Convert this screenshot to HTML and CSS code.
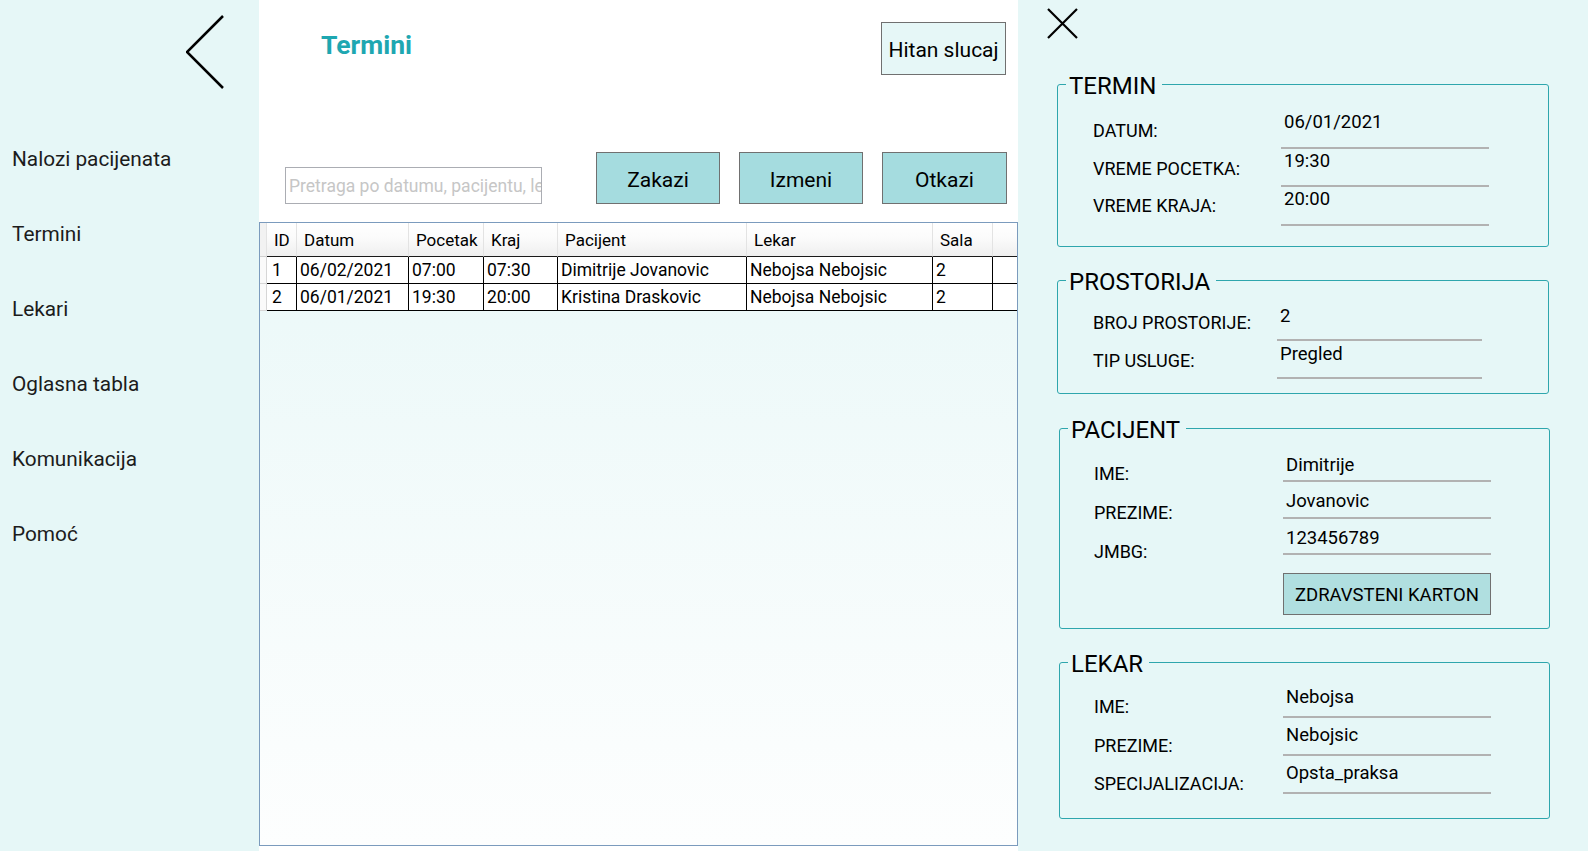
FILE: index.html
```html
<!DOCTYPE html>
<html lang="sr">
<head>
<meta charset="utf-8">
<title>Termini</title>
<link rel="stylesheet" href="styles.css">
</head>
<body>
<div class="app">
  <aside class="sidebar">
    <button class="back" type="button" aria-label="Nazad">
      <svg class="back-icon" width="38" height="74" viewBox="0 0 38 74"><path d="M37 1L1 37L37 73" fill="none" stroke="#000" stroke-width="2.5"/></svg>
    </button>
    <nav class="nav">
      <a class="nav-item" href="#">Nalozi pacijenata</a>
      <a class="nav-item" href="#">Termini</a>
      <a class="nav-item" href="#">Lekari</a>
      <a class="nav-item" href="#">Oglasna tabla</a>
      <a class="nav-item" href="#">Komunikacija</a>
      <a class="nav-item" href="#">Pomoć</a>
    </nav>
  </aside>

  <main class="main">
    <header class="main-head">
      <h1 class="title">Termini</h1>
      <button class="btn btn-urgent" type="button">Hitan slucaj</button>
    </header>
    <div class="toolbar">
      <input class="search" type="text" placeholder="Pretraga po datumu, pacijentu, lekaru">
      <div class="actions">
        <button class="btn btn-action" type="button">Zakazi</button>
        <button class="btn btn-action" type="button">Izmeni</button>
        <button class="btn btn-action btn-wide" type="button">Otkazi</button>
      </div>
    </div>
    <div class="grid">
      <table class="data">
        <colgroup>
          <col class="c-rh"><col class="c-id"><col class="c-datum"><col class="c-poc"><col class="c-kraj"><col class="c-pac"><col class="c-lek"><col class="c-sala"><col class="c-fill">
        </colgroup>
        <thead>
          <tr><th class="rh"></th><th>ID</th><th>Datum</th><th>Pocetak</th><th>Kraj</th><th>Pacijent</th><th>Lekar</th><th>Sala</th><th class="fill"></th></tr>
        </thead>
        <tbody>
          <tr><td class="rh"></td><td class="id">1</td><td>06/02/2021</td><td>07:00</td><td>07:30</td><td>Dimitrije Jovanovic</td><td>Nebojsa Nebojsic</td><td>2</td><td class="fill"></td></tr>
          <tr><td class="rh"></td><td class="id">2</td><td>06/01/2021</td><td>19:30</td><td>20:00</td><td>Kristina Draskovic</td><td>Nebojsa Nebojsic</td><td>2</td><td class="fill"></td></tr>
        </tbody>
      </table>
    </div>
  </main>

  <section class="panel">
    <button class="close" type="button" aria-label="Zatvori">
      <svg width="31" height="31" viewBox="0 0 31 31"><path d="M1 1L30 30M30 1L1 30" fill="none" stroke="#000" stroke-width="2.2"/></svg>
    </button>

    <fieldset class="group group-termin">
      <legend class="legend">TERMIN</legend>
      <div class="fields">
        <div class="labels">
          <div class="label">DATUM:</div>
          <div class="label">VREME POCETKA:</div>
          <div class="label">VREME KRAJA:</div>
        </div>
        <div class="values">
          <div class="value">06/01/2021</div>
          <div class="value">19:30</div>
          <div class="value">20:00</div>
        </div>
      </div>
    </fieldset>

    <fieldset class="group group-prostorija">
      <legend class="legend">PROSTORIJA</legend>
      <div class="fields">
        <div class="labels">
          <div class="label">BROJ PROSTORIJE:</div>
          <div class="label">TIP USLUGE:</div>
        </div>
        <div class="values">
          <div class="value">2</div>
          <div class="value">Pregled</div>
        </div>
      </div>
    </fieldset>

    <fieldset class="group group-pacijent">
      <legend class="legend">PACIJENT</legend>
      <div class="fields">
        <div class="labels">
          <div class="label">IME:</div>
          <div class="label">PREZIME:</div>
          <div class="label">JMBG:</div>
        </div>
        <div class="values">
          <div class="value">Dimitrije</div>
          <div class="value">Jovanovic</div>
          <div class="value">123456789</div>
          <button class="btn btn-karton" type="button">ZDRAVSTENI KARTON</button>
        </div>
      </div>
    </fieldset>

    <fieldset class="group group-lekar">
      <legend class="legend">LEKAR</legend>
      <div class="fields">
        <div class="labels">
          <div class="label">IME:</div>
          <div class="label">PREZIME:</div>
          <div class="label">SPECIJALIZACIJA:</div>
        </div>
        <div class="values">
          <div class="value">Nebojsa</div>
          <div class="value">Nebojsic</div>
          <div class="value">Opsta_praksa</div>
        </div>
      </div>
    </fieldset>
  </section>
</div>
</body>
</html>
```

FILE: styles.css
```css
* { box-sizing: border-box; }

html, body {
  margin: 0;
  padding: 0;
}

body {
  width: 1588px;
  height: 851px;
  overflow: hidden;
  font-family: Roboto, "Noto Sans", "Liberation Sans", sans-serif;
  color: #000;
  background: #e6f7f7;
}

button, input {
  font-family: inherit;
  color: #000;
}

.app {
  display: flex;
  height: 851px;
}

/* ---------- sidebar ---------- */
.sidebar {
  width: 259px;
  flex: none;
  background: #e6f7f7;
  display: flex;
  flex-direction: column;
}

.back {
  margin: 15px 0 0 186px;
  width: 38px;
  height: 74px;
  padding: 0;
  border: 0;
  background: none;
}

.back-icon { display: block; }

.nav {
  margin-top: 33px;
  display: flex;
  flex-direction: column;
}

.nav-item {
  height: 75px;
  line-height: 75px;
  padding-left: 12px;
  font-size: 20.8px;
  color: #1c1c1c;
  text-decoration: none;
}

/* ---------- main ---------- */
.main {
  width: 759px;
  flex: none;
  background: #fff;
  display: flex;
  flex-direction: column;
}

.main-head {
  height: 152px;
  flex: none;
  display: flex;
  justify-content: space-between;
  align-items: flex-start;
  padding: 0 12px 0 62px;
}

.title {
  margin: 30px 0 0;
  font-size: 26.5px;
  line-height: 30px;
  font-weight: 700;
  color: #1ea7b1;
}

.btn {
  padding: 0;
  border: 1px solid #707070;
  cursor: pointer;
}

.btn-urgent {
  margin-top: 22px;
  width: 125px;
  height: 53px;
  padding-top: 3px;
  background: #e6f7f7;
  font-size: 21px;
}

.toolbar {
  height: 70px;
  flex: none;
  display: flex;
  align-items: flex-start;
  padding-left: 26px;
}

.search {
  margin-top: 15px;
  width: 257px;
  height: 37px;
  border: 1px solid #abadb3;
  padding: 1px 0 0 3px;
  font-size: 17.5px;
  background: #fff;
  outline: none;
}

.search::placeholder { color: #c6c6c6; }

.actions {
  display: flex;
  gap: 19px;
  margin-left: 54px;
}

.btn-action {
  width: 124px;
  height: 52px;
  padding-top: 3px;
  background: #a5dcdf;
  font-size: 21px;
}

.btn-wide { width: 125px; }

/* ---------- data grid ---------- */
.grid {
  height: 624px;
  flex: none;
  border: 1px solid #7b9bbd;
  background: linear-gradient(#eaf8f8, #fdfefe);
  overflow: hidden;
}

.data {
  width: 757px;
  table-layout: fixed;
  border-collapse: separate;
  border-spacing: 0;
}

.c-rh { width: 7px; }
.c-id { width: 30px; }
.c-datum { width: 112px; }
.c-poc { width: 75px; }
.c-kraj { width: 74px; }
.c-pac { width: 189px; }
.c-lek { width: 186px; }
.c-sala { width: 60px; }
.c-fill { width: 24px; }

.data th {
  height: 34px;
  padding: 1px 0 0 7px;
  text-align: left;
  font-weight: 400;
  font-size: 17px;
  white-space: nowrap;
  overflow: hidden;
  border-right: 1px solid #e3e3e3;
  border-bottom: 1px solid #1a1a1a;
  background: linear-gradient(#ffffff 0%, #fbfbfb 45%, #efefef 100%);
}

.data th.rh {
  padding: 0;
  border-bottom-color: #cfcfcf;
  background: #f2f2f2;
}

.data th.fill { border-right: 0; }

.data td {
  height: 27px;
  padding: 0 0 0 3px;
  font-size: 17.5px;
  white-space: nowrap;
  overflow: hidden;
  border-right: 1px solid #000;
  border-bottom: 1px solid #000;
  background: #fff;
}

.data td.id { padding-left: 5px; }

.data td.rh {
  padding: 0;
  border-right: 1px solid #d6d6d6;
  border-bottom: 1px solid #d6d6d6;
  background: #fafafa;
}

.data td.fill { border-right: 0; }

/* ---------- right panel ---------- */
.panel {
  flex: 1;
  background: #e6f7f7;
  display: flex;
  flex-direction: column;
  align-items: flex-start;
  padding-left: 29px;
}

.close {
  margin-top: 8px;
  width: 31px;
  height: 31px;
  padding: 0;
  border: 0;
  background: none;
}

.close svg { display: block; }

.group {
  margin: 18px 0 0 10px;
  width: 492px;
  padding: 0;
  min-inline-size: 0;
  border: 1px solid #2ea6ad;
  border-radius: 3px;
}

.legend {
  margin-left: 8px;
  padding: 4px 6px 0 3px;
  font-size: 24px;
  line-height: 26px;
}

.fields {
  display: grid;
  align-items: start;
}

.labels {
  display: flex;
  flex-direction: column;
}

.label {
  font-size: 18px;
  line-height: 24px;
  white-space: nowrap;
}

.values {
  display: flex;
  flex-direction: column;
}

.value {
  border-bottom: 2px solid #b2b2b2;
  padding-left: 3px;
  font-size: 18.5px;
  line-height: 24px;
  white-space: nowrap;
}

/* TERMIN */
.group-termin { margin-top: 30px; }
.group-termin .fields {
  grid-template-columns: 188px 208px;
  padding: 11px 0 20.5px 35px;
}
.group-termin .labels { padding-top: 9px; }
.group-termin .label { height: 37.5px; }
.group-termin .value { height: 38.5px; padding-top: 0; }

/* PROSTORIJA */
.group-prostorija .fields {
  grid-template-columns: 184px 205px;
  padding: 8px 0 14px 35px;
}
.group-prostorija .labels { padding-top: 8px; }
.group-prostorija .label { height: 38px; }
.group-prostorija .value { height: 38px; padding-top: 1px; }

/* PACIJENT */
.group-pacijent { margin: 19px 0 0 12px; width: 491px; }
.group-pacijent .fields {
  grid-template-columns: 189px 208px;
  padding: 2.5px 0 13px 34px;
}
.group-pacijent .labels { padding-top: 16.5px; }
.group-pacijent .label { height: 39px; }
.group-pacijent .value { height: 36.5px; padding-top: 7px; }

.btn-karton {
  margin-top: 18px;
  width: 208px;
  height: 42px;
  padding-top: 1px;
  background: #b0dfe0;
  font-size: 18.5px;
}

/* LEKAR */
.group-lekar { margin: 18px 0 0 12px; width: 491px; }
.group-lekar .fields {
  grid-template-columns: 189px 208px;
  padding: 3px 0 22px 34px;
}
.group-lekar .labels { padding-top: 15px; }
.group-lekar .label { height: 38.5px; }
.group-lekar .value { height: 38px; padding-top: 5px; }

/* the last label only takes its own line, so it never stretches the box */
.fields .labels .label:last-child { height: auto; }
```
